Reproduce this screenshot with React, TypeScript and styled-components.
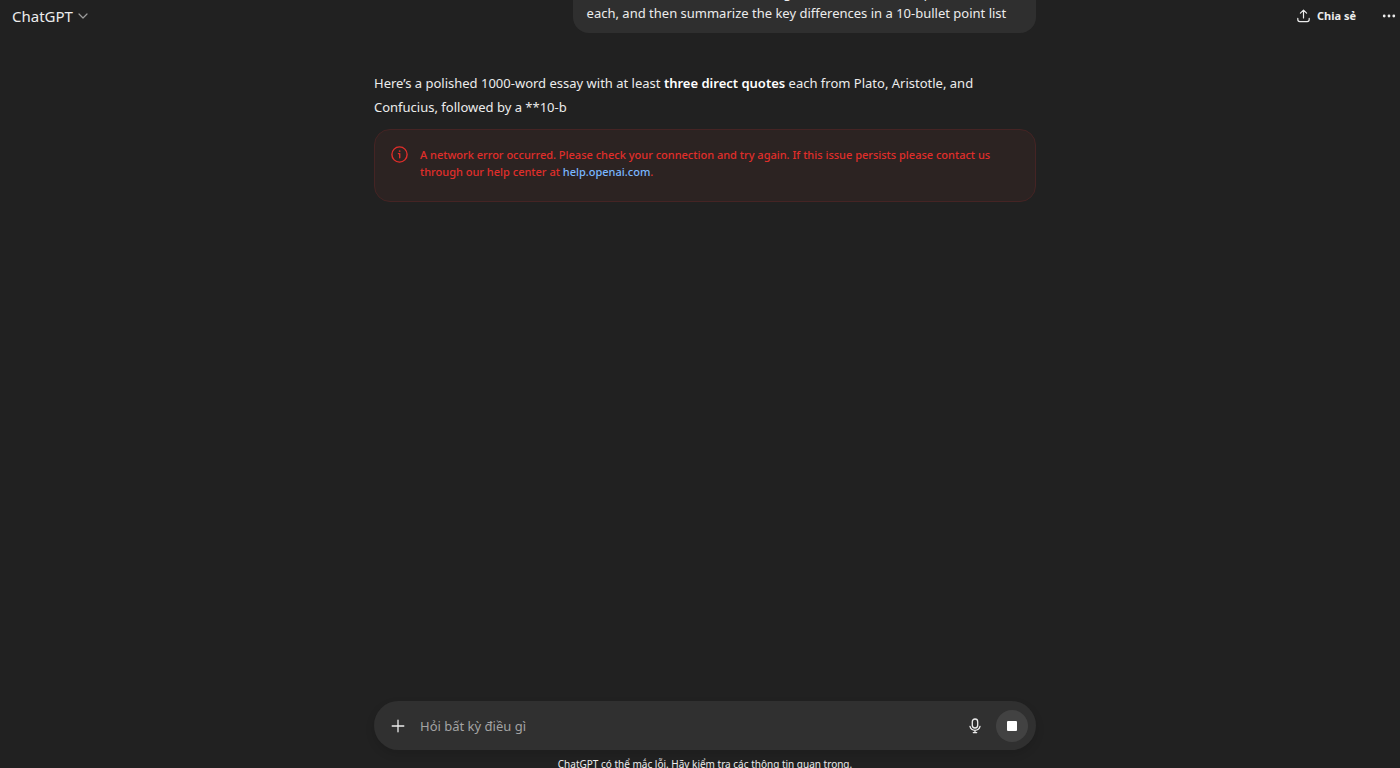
import React from "react";
import styled, { createGlobalStyle } from "styled-components";

const GlobalStyle = createGlobalStyle`
  * { box-sizing: border-box; }
  body {
    margin: 0;
    background: #212121;
    color: #ececec;
    font-family: "Noto Sans", "Open Sans", sans-serif;
    font-size: 13px;
  }
  button, input { font: inherit; color: inherit; }
  strong { font-weight: 600; color: #ffffff; }
`;

const Page = styled.div`
  position: relative;
  display: flex;
  flex-direction: column;
  height: 100vh;
  overflow: hidden;
`;

const Header = styled.header`
  position: absolute;
  inset: 0 0 auto 0;
  display: flex;
  justify-content: space-between;
  align-items: center;
  height: 32px;
  padding: 0 4px 0 12px;
  pointer-events: none;
`;

const HeaderButton = styled.button<{ $size: number; $weight: number; $gap: number }>`
  display: flex;
  align-items: center;
  gap: ${(p) => p.$gap}px;
  padding: 0;
  border: 0;
  background: none;
  font-size: ${(p) => p.$size}px;
  font-weight: ${(p) => p.$weight};
  line-height: 24px;
  cursor: pointer;
  pointer-events: auto;
`;

const Actions = styled.div`
  display: flex;
  align-items: center;
  gap: 26px;
`;

const Conversation = styled.main`
  flex: 1;
  min-height: 0;
  overflow: hidden;
  padding-left: 10px;
`;

const Thread = styled.div`
  display: flex;
  flex-direction: column;
  max-width: 662px;
  margin: -27px auto 0;
`;

const UserMessage = styled.div`
  align-self: flex-end;
  width: 70%;
  padding: 10px 14px;
  border-radius: 16px;
  background: #2f2f2f;
  line-height: 20px;
`;

const Reply = styled.p`
  margin: 38px 0 0;
  line-height: 24px;
`;

const ErrorCard = styled.div`
  display: flex;
  gap: 12px;
  min-height: 73px;
  margin-top: 10px;
  padding: 16px 24px 16px 16px;
  border: 1px solid #452424;
  border-radius: 16px;
  background: #2c2322;
  color: #e02e2a;
  font-size: 11px;
  font-weight: 500;
  line-height: 17px;

  svg { flex: none; }
  p { margin: 0; }
`;

const HelpLink = styled.a`
  color: #7ab7ff;
  text-decoration: none;
`;

const Bottom = styled.footer`
  padding-left: 10px;
`;

const Composer = styled.form`
  display: flex;
  align-items: center;
  max-width: 662px;
  height: 49px;
  margin: 0 auto;
  padding: 0 8px 0 16px;
  border-radius: 25px;
  background: #303030;
  box-shadow: 0 4px 10px rgba(0, 0, 0, 0.12);
`;

const Prompt = styled.input`
  flex: 1;
  min-width: 0;
  margin-left: 14px;
  padding: 0;
  border: 0;
  outline: 0;
  background: none;

  &::placeholder { color: #a3a3a3; opacity: 1; }
`;

const IconButton = styled.button`
  display: grid;
  place-items: center;
  padding: 0;
  border: 0;
  background: none;
  cursor: pointer;
`;

const StopButton = styled(IconButton)`
  width: 32px;
  height: 32px;
  margin-left: 14px;
  border-radius: 50%;
  background: #424242;
`;

const Disclaimer = styled.p`
  height: 18px;
  margin: 0;
  padding-top: 7px;
  overflow: hidden;
  font-size: 10px;
  line-height: 14px;
  text-align: center;
`;

const stroke = {
  fill: "none",
  stroke: "currentColor",
  strokeLinecap: "round" as const,
  strokeLinejoin: "round" as const,
};

export default function App() {
  return (
    <Page>
      <GlobalStyle />
      <Conversation>
        <Thread>
          <UserMessage>
            Aristotle and Confucius and bring no fewer than three quotes from
            <br />
            each, and then summarize the key differences in a 10-bullet point list
          </UserMessage>
          <Reply>
            Here’s a polished 1000-word essay with at least <strong>three direct quotes</strong> each
            from Plato, Aristotle, and Confucius, followed by a **10-b
          </Reply>
          <ErrorCard role="alert">
            <svg width="17" height="17" viewBox="0 0 17 17" {...stroke} strokeWidth="1.4">
              <circle cx="8.5" cy="8.5" r="7.6" />
              <path d="M7.4 7.6h1.3v4.2" />
              <circle cx="8.5" cy="5.1" r="0.4" fill="currentColor" strokeWidth="0.8" />
            </svg>
            <p>
              A network error occurred. Please check your connection and try again. If this issue
              persists please contact us through our help center at{" "}
              <HelpLink href="https://help.openai.com">help.openai.com</HelpLink>.
            </p>
          </ErrorCard>
        </Thread>
      </Conversation>
      <Header>
        <HeaderButton $size={15} $weight={400} $gap={5}>
          ChatGPT
          <svg width="10" height="10" viewBox="0 0 10 10" {...stroke} stroke="#9b9b9b" strokeWidth="1.2">
            <path d="M1 3l4 4 4-4" />
          </svg>
        </HeaderButton>
        <Actions>
          <HeaderButton $size={11} $weight={700} $gap={7}>
            <svg width="13" height="14" viewBox="0 0 13 14" {...stroke} strokeWidth="1.2">
              <path d="M6.5 9V1.2M3.4 4.1l3.1-3 3.1 3M0.8 9.4v1.2c0 1.3 0.8 2 2 2h7.4c1.2 0 2-0.7 2-2V9.4" />
            </svg>
            Chia sẻ
          </HeaderButton>
          <HeaderButton $size={11} $weight={400} $gap={0} aria-label="Tùy chọn khác">
            <svg width="14" height="4" viewBox="0 0 14 4" fill="currentColor">
              <circle cx="2.2" cy="2" r="1.4" />
              <circle cx="7" cy="2" r="1.4" />
              <circle cx="11.8" cy="2" r="1.4" />
            </svg>
          </HeaderButton>
        </Actions>
      </Header>
      <Bottom>
        <Composer onSubmit={(e) => e.preventDefault()}>
          <IconButton type="button" aria-label="Thêm">
            <svg width="16" height="16" viewBox="0 0 16 16" {...stroke} strokeWidth="1.3">
              <path d="M8 2.2v11.6M2.2 8h11.6" />
            </svg>
          </IconButton>
          <Prompt aria-label="Hỏi bất kỳ điều gì" placeholder="Hỏi bất kỳ điều gì" />
          <IconButton type="button" aria-label="Đọc chính tả">
            <svg width="14" height="16" viewBox="0 0 14 16" {...stroke} strokeWidth="1.3">
              <rect x="4.3" y="1" width="5.4" height="9" rx="2.7" />
              <path d="M2 8.4c0.6 2.4 2.6 3.9 5 3.9s4.4-1.5 5-3.9M7 12.3v2.3M5.3 14.6h3.4" />
            </svg>
          </IconButton>
          <StopButton type="button" aria-label="Dừng">
            <svg width="10" height="10" viewBox="0 0 10 10" fill="#ffffff">
              <rect width="10" height="10" rx="1" />
            </svg>
          </StopButton>
        </Composer>
        <Disclaimer>ChatGPT có thể mắc lỗi. Hãy kiểm tra các thông tin quan trọng.</Disclaimer>
      </Bottom>
    </Page>
  );
}
